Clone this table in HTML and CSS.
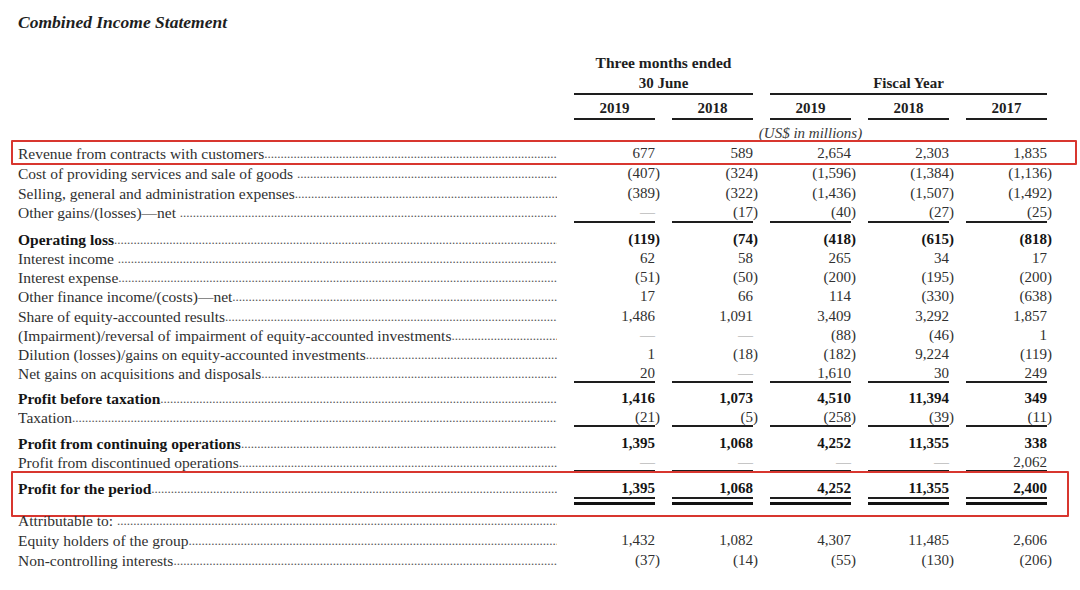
FILE: index.html
```html
<!DOCTYPE html>
<html lang="en">
<head>
<meta charset="utf-8">
<title>Combined Income Statement</title>
<link rel="stylesheet" href="styles.css">
</head>
<body>
<div class="page">
  <div class="title">Combined Income Statement</div>

  <div class="grid head ha">
    <div></div>
    <div class="span2">Three months ended</div>
  </div>
  <div class="grid head hb">
    <div></div>
    <div class="span2 line">30 June</div>
    <div class="span3 line">Fiscal Year</div>
  </div>
  <div class="grid head hc">
    <div></div>
    <div class="line">2019</div>
    <div class="line">2018</div>
    <div class="line">2019</div>
    <div class="line">2018</div>
    <div class="line">2017</div>
  </div>
  <div class="grid head hd">
    <div></div>
    <div class="span5 unit">(US$ in millions)</div>
  </div>

  <div class="rows">
    <div class="grid row tall box1">
      <div class="l"><span>Revenue from contracts with customers</span></div>
      <div class="n">677</div><div class="n">589</div><div class="n">2,654</div><div class="n">2,303</div><div class="n">1,835</div>
    </div>
    <div class="grid row tall">
      <div class="l"><span>Cost of providing services and sale of goods&nbsp;</span></div>
      <div class="n">(407<span class="rp">)</span></div><div class="n">(324<span class="rp">)</span></div><div class="n">(1,596<span class="rp">)</span></div><div class="n">(1,384<span class="rp">)</span></div><div class="n">(1,136<span class="rp">)</span></div>
    </div>
    <div class="grid row tall">
      <div class="l"><span>Selling, general and administration expenses</span></div>
      <div class="n">(389<span class="rp">)</span></div><div class="n">(322<span class="rp">)</span></div><div class="n">(1,436<span class="rp">)</span></div><div class="n">(1,507<span class="rp">)</span></div><div class="n">(1,492<span class="rp">)</span></div>
    </div>
    <div class="grid row tall u">
      <div class="l"><span>Other gains/(losses)—net&nbsp;</span></div>
      <div class="n"><span class="d">—</span></div><div class="n">(17<span class="rp">)</span></div><div class="n">(40<span class="rp">)</span></div><div class="n">(27<span class="rp">)</span></div><div class="n">(25<span class="rp">)</span></div>
    </div>

    <div class="grid row b g-op">
      <div class="l"><span>Operating loss</span></div>
      <div class="n">(119<span class="rp">)</span></div><div class="n">(74<span class="rp">)</span></div><div class="n">(418<span class="rp">)</span></div><div class="n">(615<span class="rp">)</span></div><div class="n">(818<span class="rp">)</span></div>
    </div>
    <div class="grid row">
      <div class="l"><span>Interest income&nbsp;</span></div>
      <div class="n">62</div><div class="n">58</div><div class="n">265</div><div class="n">34</div><div class="n">17</div>
    </div>
    <div class="grid row">
      <div class="l"><span>Interest expense</span></div>
      <div class="n">(51<span class="rp">)</span></div><div class="n">(50<span class="rp">)</span></div><div class="n">(200<span class="rp">)</span></div><div class="n">(195<span class="rp">)</span></div><div class="n">(200<span class="rp">)</span></div>
    </div>
    <div class="grid row">
      <div class="l"><span>Other finance income/(costs)—net</span></div>
      <div class="n">17</div><div class="n">66</div><div class="n">114</div><div class="n">(330<span class="rp">)</span></div><div class="n">(638<span class="rp">)</span></div>
    </div>
    <div class="grid row">
      <div class="l"><span>Share of equity-accounted results</span></div>
      <div class="n">1,486</div><div class="n">1,091</div><div class="n">3,409</div><div class="n">3,292</div><div class="n">1,857</div>
    </div>
    <div class="grid row">
      <div class="l"><span>(Impairment)/reversal of impairment of equity-accounted investments</span></div>
      <div class="n"><span class="d">—</span></div><div class="n"><span class="d">—</span></div><div class="n">(88<span class="rp">)</span></div><div class="n">(46<span class="rp">)</span></div><div class="n">1</div>
    </div>
    <div class="grid row">
      <div class="l"><span>Dilution (losses)/gains on equity-accounted investments</span></div>
      <div class="n">1</div><div class="n">(18<span class="rp">)</span></div><div class="n">(182<span class="rp">)</span></div><div class="n">9,224</div><div class="n">(119<span class="rp">)</span></div>
    </div>
    <div class="grid row u">
      <div class="l"><span>Net gains on acquisitions and disposals</span></div>
      <div class="n">20</div><div class="n"><span class="d">—</span></div><div class="n">1,610</div><div class="n">30</div><div class="n">249</div>
    </div>

    <div class="grid row b g-pbt">
      <div class="l"><span>Profit before taxation</span></div>
      <div class="n">1,416</div><div class="n">1,073</div><div class="n">4,510</div><div class="n">11,394</div><div class="n">349</div>
    </div>
    <div class="grid row u">
      <div class="l"><span>Taxation</span></div>
      <div class="n">(21<span class="rp">)</span></div><div class="n">(5<span class="rp">)</span></div><div class="n">(258<span class="rp">)</span></div><div class="n">(39<span class="rp">)</span></div><div class="n">(11<span class="rp">)</span></div>
    </div>

    <div class="grid row b g-pco">
      <div class="l"><span>Profit from continuing operations</span></div>
      <div class="n">1,395</div><div class="n">1,068</div><div class="n">4,252</div><div class="n">11,355</div><div class="n">338</div>
    </div>
    <div class="grid row u">
      <div class="l"><span>Profit from discontinued operations</span></div>
      <div class="n"><span class="d">—</span></div><div class="n"><span class="d">—</span></div><div class="n"><span class="d">—</span></div><div class="n"><span class="d">—</span></div><div class="n">2,062</div>
    </div>

    <div class="grid row b dbl g-pfp box2">
      <div class="l"><span>Profit for the period</span></div>
      <div class="n">1,395</div><div class="n">1,068</div><div class="n">4,252</div><div class="n">11,355</div><div class="n">2,400</div>
    </div>

    <div class="grid row g-att">
      <div class="l"><span>Attributable to:&nbsp;</span></div>
    </div>
    <div class="grid row g-eq">
      <div class="l"><span>Equity holders of the group</span></div>
      <div class="n">1,432</div><div class="n">1,082</div><div class="n">4,307</div><div class="n">11,485</div><div class="n">2,606</div>
    </div>
    <div class="grid row">
      <div class="l"><span>Non-controlling interests</span></div>
      <div class="n">(37<span class="rp">)</span></div><div class="n">(14<span class="rp">)</span></div><div class="n">(55<span class="rp">)</span></div><div class="n">(130<span class="rp">)</span></div><div class="n">(206<span class="rp">)</span></div>
    </div>
  </div>
</div>
</body>
</html>
```

FILE: styles.css
```css
* {
  box-sizing: border-box;
  margin: 0;
  padding: 0;
}

html, body {
  background: #ffffff;
}

body {
  font-family: "Liberation Serif", "Times New Roman", serif;
  color: #303030;
}

.page {
  width: 1080px;
  height: 590px;
  overflow: hidden;
  padding: 12px 0 0 18px;
}

.title {
  font-size: 17.5px;
  font-weight: bold;
  font-style: italic;
  line-height: 20px;
  height: 20px;
  color: #1e1e1e;
}

.grid {
  display: grid;
  grid-template-columns: 539px repeat(5, 81px);
  column-gap: 17px;
}

/* ---------- column headings ---------- */
.head {
  font-size: 15px;
  font-weight: bold;
  line-height: 20px;
  text-align: center;
  color: #1e1e1e;
}

.ha {
  margin-top: 21px;
  height: 20px;
  font-size: 15.5px;
}

.hb,
.hc {
  height: 22px;
}

.hc,
.hd {
  margin-top: 3px;
}

.span2 { grid-column: span 2; }
.span3 { grid-column: span 3; }
.span5 { grid-column: 2 / 7; }

.line {
  border-bottom: 2px solid #1e1e1e;
}

.unit {
  font-weight: normal;
  font-style: italic;
  color: #3a3a3a;
  height: 20px;
}

/* ---------- data rows ---------- */
.rows {
  margin-top: 1px;
}

.row {
  height: 19.2px;
  font-size: 15px;
  line-height: 19.2px;
  position: relative;
}

.row.tall {
  height: 19.8px;
  line-height: 19.8px;
}

.l {
  display: flex;
  white-space: nowrap;
  overflow: hidden;
  font-size: 15.5px;
}

.l span {
  flex: none;
}

.l::after {
  content: "......................................................................................................................................................................................................................................................";
  flex: 1 1 0;
  min-width: 0;
  overflow: hidden;
  font-size: 13px;
  font-weight: normal;
  color: #555555;
}

.n {
  text-align: right;
  white-space: nowrap;
}

.rp {
  margin-right: -0.333em;
}

.d {
  color: #9a9a9a;
}

.b {
  font-weight: bold;
  color: #141414;
}

.u .n {
  background: linear-gradient(#1e1e1e, #1e1e1e) left 0 bottom 0 / 100% 2px no-repeat;
}

.dbl {
  height: 26.2px;
}

.dbl .n {
  background:
    linear-gradient(#1e1e1e, #1e1e1e) left 0 bottom 6px / 100% 2px no-repeat,
    linear-gradient(#111111, #111111) left 0 bottom 0 / 100% 3px no-repeat;
}

/* group spacing */
.g-op { margin-top: 6.6px; }
.g-pbt { margin-top: 5.5px; }
.g-pco { margin-top: 6.5px; }
.g-pfp { margin-top: 7px; }
.g-att { margin-top: 6px; }
.g-eq { margin-top: 1px; }

/* red highlight annotations drawn over the statement */
.box1::before,
.box2::before {
  content: "";
  position: absolute;
  border: 2px solid #d8362f;
  border-radius: 1px;
  pointer-events: none;
}

.box1::before {
  top: -4px;
  bottom: -1px;
  left: -7px;
  right: 3px;
}

.box2::before {
  top: -8px;
  bottom: -12px;
  left: -7px;
  right: 11px;
}
```
